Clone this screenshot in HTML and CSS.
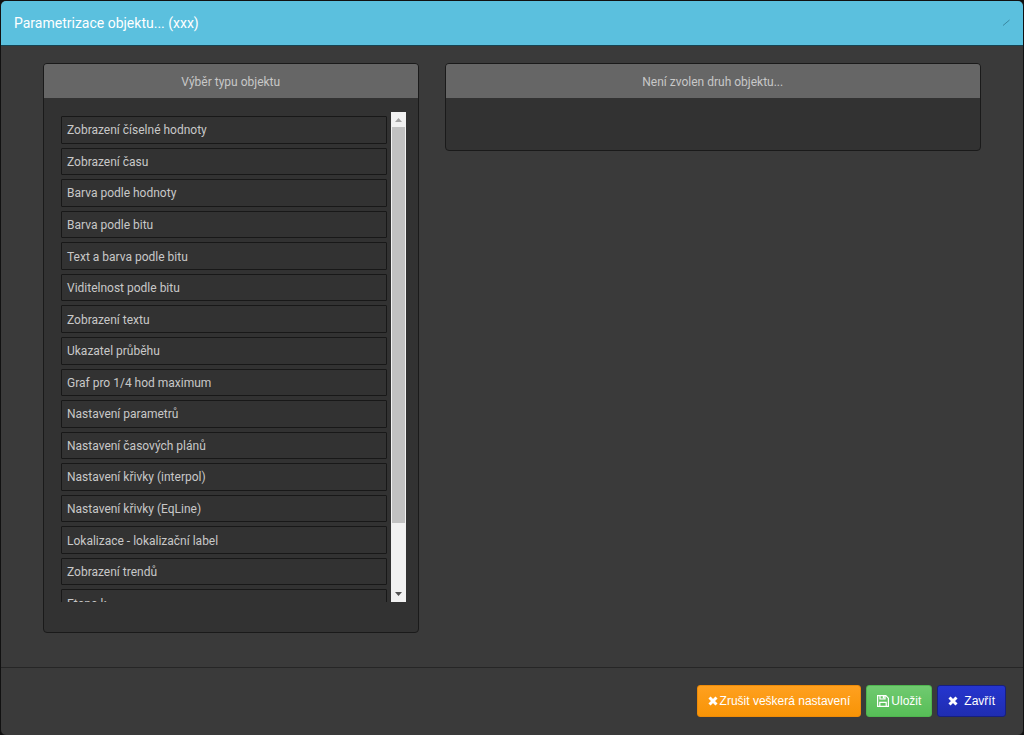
FILE: index.html
```html
<!DOCTYPE html>
<html lang="cs">
<head>
<meta charset="utf-8">
<title>Parametrizace objektu</title>
<link rel="stylesheet" href="styles.css">
</head>
<body>
<div class="modal" role="dialog" aria-labelledby="modal-title">
  <header class="modal-header">
    <h1 class="modal-title" id="modal-title">Parametrizace objektu... (xxx)</h1>
    <svg class="resize-mark" viewBox="0 0 8 8" aria-hidden="true"><path d="M1 6.5 7.500 1"/></svg>
  </header>
  <main class="modal-body">
    <section class="panel">
      <h2 class="panel-heading">Výběr typu objektu</h2>
      <div class="panel-body">
        <div class="scroller">
          <ul class="types">
            <li><button class="type" type="button">Zobrazení číselné hodnoty</button></li>
            <li><button class="type" type="button">Zobrazení času</button></li>
            <li><button class="type" type="button">Barva podle hodnoty</button></li>
            <li><button class="type" type="button">Barva podle bitu</button></li>
            <li><button class="type" type="button">Text a barva podle bitu</button></li>
            <li><button class="type" type="button">Viditelnost podle bitu</button></li>
            <li><button class="type" type="button">Zobrazení textu</button></li>
            <li><button class="type" type="button">Ukazatel průběhu</button></li>
            <li><button class="type" type="button">Graf pro 1/4 hod maximum</button></li>
            <li><button class="type" type="button">Nastavení parametrů</button></li>
            <li><button class="type" type="button">Nastavení časových plánů</button></li>
            <li><button class="type" type="button">Nastavení křivky (interpol)</button></li>
            <li><button class="type" type="button">Nastavení křivky (EqLine)</button></li>
            <li><button class="type" type="button">Lokalizace - lokalizační label</button></li>
            <li><button class="type" type="button">Zobrazení trendů</button></li>
            <li><button class="type" type="button">Etapa k</button></li>
          </ul>
          <div class="scrollbar" aria-hidden="true">
            <svg class="arrow arrow-up" viewBox="0 0 15 15"><path d="M4 10 7.500 6 11 10z"/></svg>
            <div class="track"><div class="thumb"></div></div>
            <svg class="arrow arrow-down" viewBox="0 0 15 15"><path d="M4 5 7.500 9 11 5z"/></svg>
          </div>
        </div>
      </div>
    </section>
    <section class="panel">
      <h2 class="panel-heading">Není zvolen druh objektu...</h2>
      <div class="panel-body panel-empty"></div>
    </section>
  </main>
  <footer class="modal-footer">
    <button class="btn btn-warning" type="button"><svg class="icon" viewBox="0 0 10 10" aria-hidden="true"><path class="cross" d="M1.500 1.500 8.500 8.500M8.500 1.500 1.500 8.500"/></svg>Zrušit veškerá nastavení</button>
    <button class="btn btn-success" type="button"><svg class="icon icon-save" viewBox="0 0 12 12" aria-hidden="true"><path class="disk" d="M.6 .6H8.800L11.400 3.200V11.400H.6zM3 .6V4H8V.6M2.800 11.400V7.300H9.200V11.400"/><path class="disk-fill" d="M5.800 1H7.300V3.500H5.800z"/></svg>Uložit</button>
    <button class="btn btn-primary" type="button"><svg class="icon" viewBox="0 0 10 10" aria-hidden="true"><path class="cross" d="M1.500 1.500 8.500 8.500M8.500 1.500 1.500 8.500"/></svg>Zavřít</button>
  </footer>
</div>
</body>
</html>
```
FILE: styles.css
```css
* {
  box-sizing: border-box;
}

body {
  margin: 0;
  background: #101010;
  color: #c8c8c8;
  font-family: Roboto, "Open Sans", sans-serif;
  font-size: 12px;
  line-height: 20px;
}

.modal {
  display: flex;
  flex-direction: column;
  min-height: 100vh;
  border: 1px solid #111;
  border-radius: 6px;
  background: #3a3a3a;
  overflow: hidden;
}

.modal-header {
  display: flex;
  align-items: center;
  justify-content: space-between;
  padding: 12px 13px;
  border-bottom: 1px solid #154453;
  background: #5bc0de;
}

.modal-title {
  margin: 0;
  color: #fff;
  font-size: 14px;
  font-weight: 400;
  line-height: 20px;
}

.resize-mark {
  width: 8px;
  height: 8px;
  fill: none;
  stroke: #3b87a0;
}

.modal-body {
  flex: 1;
  display: grid;
  grid-template-columns: 7fr 10fr;
  align-items: start;
  gap: 26px;
  padding: 17px 42px 34px;
}

.panel {
  border: 1px solid #1a1a1a;
  border-radius: 4px;
  background: #323232;
  overflow: hidden;
}

.panel-heading {
  margin: 0;
  padding: 8px 16px 6px;
  background: #666;
  color: #c8c8c8;
  font-size: 12px;
  font-weight: 400;
  line-height: 20px;
  text-align: center;
}

.panel-body {
  padding: 14px 12px 30px 17px;
}

.panel-empty {
  min-height: 52px;
  padding: 0;
}

.scroller {
  display: flex;
  gap: 4px;
  height: 490px;
  overflow: hidden;
}

.types {
  flex: 1;
  display: grid;
  grid-auto-rows: 1fr;
  gap: 4px;
  height: 501px;
  margin: 4px 0 0;
  padding: 0;
  list-style: none;
}

.type {
  display: block;
  width: 100%;
  height: 100%;
  padding: 1px 5px 0;
  border: 1px solid #181818;
  border-radius: 1px;
  background: #323232;
  color: #c8c8c8;
  font: inherit;
  text-align: left;
}

.scrollbar {
  display: flex;
  flex-direction: column;
  width: 15px;
  background: #f1f1f1;
}

.arrow {
  width: 15px;
  height: 15px;
}

.arrow-up {
  fill: #a3a3a3;
}

.arrow-down {
  fill: #505050;
}

.track {
  flex: 1;
  padding: 0 1px;
}

.thumb {
  height: 86%;
  background: #c1c1c1;
}

.modal-footer {
  display: flex;
  justify-content: flex-end;
  gap: 5px;
  padding: 17px 17px 18px;
  border-top: 1px solid #262626;
}

.btn {
  display: flex;
  align-items: center;
  gap: 2px;
  height: 32px;
  padding: 0 10px;
  border: 1px solid;
  border-radius: 3px;
  color: #fff;
  font-family: "Liberation Sans", sans-serif;
  font-size: 12px;
  font-weight: 400;
}

.btn-warning {
  border-color: #ee8b08;
  background: linear-gradient(#ffa01f, #f89406);
}

.btn-success {
  border-color: #4fb64f;
  background: linear-gradient(#70ca70, #57be57);
}

.btn-primary {
  gap: 6px;
  border-color: #161f80;
  background: linear-gradient(#2535cf, #1f2db0);
}

.icon {
  width: 10px;
  height: 10px;
}

.icon-save {
  width: 12px;
  height: 12px;
}

.cross {
  fill: none;
  stroke: #fff;
  stroke-width: 3;
}

.disk {
  fill: none;
  stroke: #fff;
  stroke-width: 1.2;
}

.disk-fill {
  fill: #fff;
}
```
